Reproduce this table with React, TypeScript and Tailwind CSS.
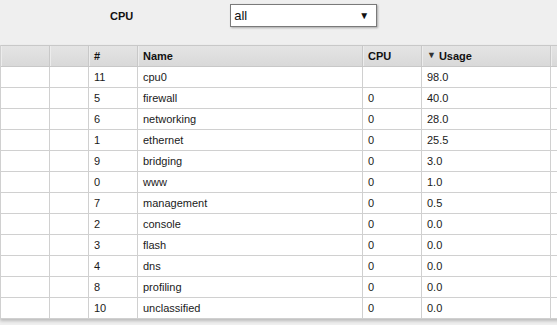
import React from "react";

type Row = { id: string; name: string; cpu: string; usage: string };

const rows: Row[] = [
  { id: "11", name: "cpu0", cpu: "", usage: "98.0" },
  { id: "5", name: "firewall", cpu: "0", usage: "40.0" },
  { id: "6", name: "networking", cpu: "0", usage: "28.0" },
  { id: "1", name: "ethernet", cpu: "0", usage: "25.5" },
  { id: "9", name: "bridging", cpu: "0", usage: "3.0" },
  { id: "0", name: "www", cpu: "0", usage: "1.0" },
  { id: "7", name: "management", cpu: "0", usage: "0.5" },
  { id: "2", name: "console", cpu: "0", usage: "0.0" },
  { id: "3", name: "flash", cpu: "0", usage: "0.0" },
  { id: "4", name: "dns", cpu: "0", usage: "0.0" },
  { id: "8", name: "profiling", cpu: "0", usage: "0.0" },
  { id: "10", name: "unclassified", cpu: "0", usage: "0.0" },
];

// column widths incl. right border
const cols = "grid grid-cols-[49px_39px_49px_225px_59px_129px_60px]";

function HeadCell({ children }: { children?: React.ReactNode }) {
  return (
    <div className="flex items-center border-r border-[#c8c8c8] pl-[5px] shadow-[inset_1px_0_0_#ececec] font-bold text-[#111]">
      {children}
    </div>
  );
}

function Cell({ children }: { children?: React.ReactNode }) {
  return (
    <div className="flex items-center border-r border-[#d0d0d0] pl-[5px] text-[#1a1a1a]">
      {children}
    </div>
  );
}

export default function App() {
  return (
    <div
      className="w-[557px] h-[325px] overflow-hidden bg-[#efefef] text-[11px]"
      style={{ fontFamily: '"Liberation Sans", Arial, sans-serif' }}
    >
      <div className="h-[45px] flex items-start">
        <div className="w-[110px]" />
        <div className="mt-[9px] font-bold text-[#111] leading-[14px]">CPU</div>
        <div className="w-[97px]" />
        <div className="mt-[4px] w-[147px] h-[23px] bg-white border border-[#7a7a7a] shadow-[1px_1px_2px_rgba(0,0,0,0.3)] flex items-center justify-between pl-[3px] pr-[7px]">
          <span className="text-[13px] text-[#111]">all</span>
          <span className="text-[10px] text-[#111]">▼</span>
        </div>
      </div>

      <div className="w-[610px] bg-white border-l border-[#d0d0d0] shadow-[0_2px_3px_rgba(0,0,0,0.22)]">
        <div className={`${cols} h-[22px] border-t border-b border-[#c8c8c8] bg-gradient-to-b from-[#e4e4e4] to-[#d9d9d9]`}>
          <HeadCell />
          <HeadCell />
          <HeadCell>#</HeadCell>
          <HeadCell>Name</HeadCell>
          <HeadCell>CPU</HeadCell>
          <HeadCell>
            <span className="text-[9px] text-[#333] mr-[3px]">▼</span>Usage
          </HeadCell>
          <HeadCell />
        </div>
        {rows.map((r) => (
          <div key={r.id} className={`${cols} h-[21px] border-b border-[#d0d0d0]`}>
            <Cell />
            <Cell />
            <Cell>{r.id}</Cell>
            <Cell>{r.name}</Cell>
            <Cell>{r.cpu}</Cell>
            <Cell>{r.usage}</Cell>
            <Cell />
          </div>
        ))}
      </div>
    </div>
  );
}
